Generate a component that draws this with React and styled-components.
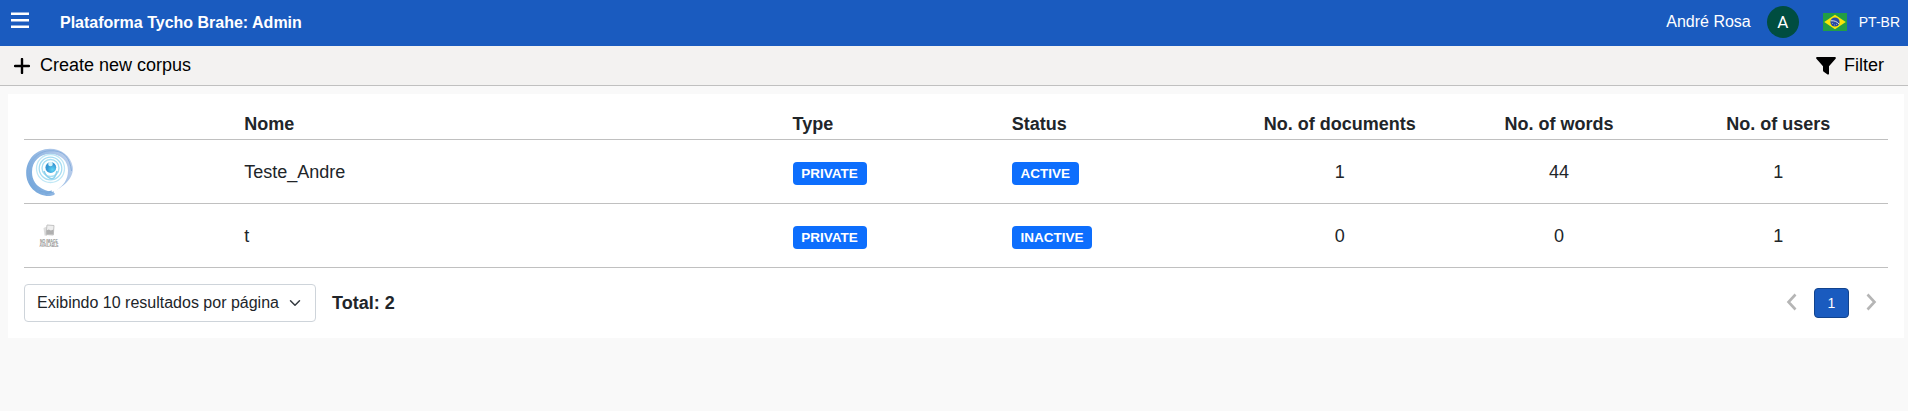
import React from "react";
import styled, { createGlobalStyle } from "styled-components";

const GlobalStyle = createGlobalStyle`
  * { box-sizing: border-box; }
  body {
    margin: 0;
    background: #f9f9f9;
    color: #212529;
    font-family: "Liberation Sans", Arial, sans-serif;
    font-size: 18px;
    line-height: 1.5;
  }
`;

const Header = styled.header`
  height: 46px;
  padding: 0 8px 0 11px;
  display: flex;
  align-items: center;
  justify-content: space-between;
  background: #1a5bbf;
  color: #fff;
`;

const Group = styled.div`
  display: flex;
  align-items: center;
`;

const MenuIcon = styled.svg`
  display: block;
  margin: 0 31px 6px 0;
`;

const Title = styled.h1`
  margin: 0;
  font-size: 16px;
  line-height: 24px;
`;

const UserName = styled.span`
  margin: 0 16px 2px 0;
  font-size: 16px;
  line-height: 24px;
`;

const Avatar = styled.span`
  width: 32px;
  height: 32px;
  margin: -2px 24px 0 0;
  border-radius: 50%;
  background: #004d40;
  display: flex;
  align-items: center;
  justify-content: center;
  padding-top: 2px;
  font-family: Roboto, sans-serif;
  font-size: 17px;
`;

const Flag = styled.svg`
  display: block;
  margin: -2px 12px 0 0;
`;

const Language = styled.span`
  font-size: 14px;
  line-height: 20px;
  margin-bottom: 2px;
`;

const Toolbar = styled.div`
  height: 40px;
  padding: 0 24px 0 14px;
  display: flex;
  align-items: center;
  justify-content: space-between;
  background: #f3f2f1;
  border-bottom: 1px solid #c0c0c0;
  color: #000;
`;

const Action = styled.button`
  display: flex;
  align-items: center;
  gap: ${(p) => p.$gap}px;
  padding: 0;
  border: 0;
  background: none;
  color: inherit;
  font: inherit;
`;

const Card = styled.main`
  margin: 8px 4px 0 8px;
  padding: 16px;
  height: 244px;
  background: #fff;
`;

const Table = styled.table`
  width: 100%;
  table-layout: fixed;
  border-collapse: separate;
  border-spacing: 0;
`;

const Row = styled.tr`
  height: ${(p) => (p.$head ? 30 : 64)}px;
`;

const HeadCell = styled.th`
  padding: 1px;
  text-align: ${(p) => (p.$center ? "center" : "left")};
  border-bottom: 1px solid #c0c0c0;
  width: ${(p) => (p.$wide ? 2.5 : 1) * (100 / 8.5)}%;
`;

const Cell = styled.td`
  padding: 3px 1px 1px;
  vertical-align: middle;
  text-align: ${(p) => (p.$center ? "center" : "left")};
  border-bottom: 1px solid #c0c0c0;
`;

const Thumb = styled.svg`
  display: block;
`;

const Badge = styled.span`
  display: inline-block;
  padding: 0.35em 0.65em;
  border-radius: 4px;
  background: #0d6efd;
  color: #fff;
  font-size: 13.5px;
  font-weight: 700;
  line-height: 1;
  vertical-align: baseline;
`;

const Footer = styled.div`
  margin-top: 16px;
  display: flex;
  align-items: center;
  justify-content: space-between;
`;

const PageSize = styled.button`
  width: 292px;
  height: 38px;
  margin-right: 16px;
  padding: 0 14px 0 12px;
  display: flex;
  align-items: center;
  justify-content: space-between;
  border: 1px solid #ced4da;
  border-radius: 4px;
  background: #fff;
  color: inherit;
  font-family: inherit;
  font-size: 16px;
`;

const Pager = styled.nav`
  display: flex;
  align-items: center;
  gap: 17px;
  padding-right: 6px;
  svg { display: block; margin-bottom: 2px; }
`;

const PageButton = styled.button`
  width: 35px;
  height: 30px;
  padding: 0;
  border: 1px solid #12438d;
  border-radius: 4px;
  background: #1a5bbf;
  color: #fff;
  font-family: inherit;
  font-size: 14px;
`;

const SwirlThumb = () => (
  <Thumb width="50" height="50" viewBox="0 0 50 50" fill="none">
    <defs>
      <linearGradient id="ring" x1="0" y1="0.8" x2="1" y2="0.3">
        <stop offset="0" stopColor="#6fa4da" />
        <stop offset="0.5" stopColor="#98bbe4" />
        <stop offset="1" stopColor="#bccfec" />
      </linearGradient>
      <radialGradient id="ball" cx="0.65" cy="0.7">
        <stop offset="0" stopColor="#5ed4f5" />
        <stop offset="1" stopColor="#3797d3" />
      </radialGradient>
    </defs>
    <path
      d="M31 42.500C38 38 49 31 47.800 19C46 8 36 .8 25 .8C11 1 1.200 11.500 1.200 25C1.200 38 11.500 48 24 48C27 48 30 47 30 45.500C27 43.500 24 44 20 42C11 38.500 7 32 7 24C7 13 15 6 25 6C36 6 43 13 43 22.500C43 32 38 38 31 42.500Z"
      fill="url(#ring)"
    />
    <path d="M4 34C0 19 9 4 24 2.800S45 10 46.500 23" stroke="#86aedd" strokeWidth="1" />
    <path d="M14 42.500q6 3 13 .5M20 46l9-2" stroke="#78a8da" strokeWidth="1.200" />
    <circle cx="25.500" cy="20.500" r="14" stroke="#bfe7f5" strokeWidth="1.300" />
    <circle cx="25.500" cy="20.500" r="11.300" stroke="#a5ddf2" strokeWidth="1.300" />
    <circle cx="25.500" cy="20" r="8.500" stroke="#a8dff3" strokeWidth="1.400" />
    <path d="M19 23Q21 29 25.500 30.500T32 23" stroke="#8bd0ec" strokeWidth="1.500" />
    <circle cx="25.800" cy="19.500" r="5.400" fill="url(#ball)" />
    <circle cx="25.500" cy="16" r="2.300" fill="#d5f2fb" />
  </Thumb>
);

const NoImageThumb = () => (
  <Thumb width="50" height="50" viewBox="0 0 50 50">
    <path d="M18.500 16L22 14.500V24L19.500 23.500Z" fill="#ddd" />
    <path d="M22 13l7 .5-.7 9.500-7.300-.5Z" fill="#eee" stroke="#c4c4c4" />
    <path d="M21.300 18.500l2.500-1 2 1 2.700-1-.2 5-7-.3Z" fill="#b0b0b0" />
    <g fill="#8c8c8c" fontSize="4.500" fontFamily="Liberation Sans" fontWeight="700">
      <text x="15" y="30.500" textLength="18" lengthAdjust="spacingAndGlyphs">NO IMAGE</text>
      <text x="14.500" y="35" textLength="19" lengthAdjust="spacingAndGlyphs">AVAILABLE</text>
    </g>
  </Thumb>
);

const Chevron = ({ d }) => (
  <svg width="16" height="18" viewBox="0 0 16 18" fill="none" stroke="#b5b5b5" strokeWidth="2.600">
    <path d={d} />
  </svg>
);

const columns = [
  { label: "" },
  { label: "Nome", wide: true },
  { label: "Type" },
  { label: "Status" },
  { label: "No. of documents", center: true },
  { label: "No. of words", center: true },
  { label: "No. of users", center: true },
];

const corpora = [
  { name: "Teste_Andre", type: "PRIVATE", status: "ACTIVE", counts: [1, 44, 1], Image: SwirlThumb },
  { name: "t", type: "PRIVATE", status: "INACTIVE", counts: [0, 0, 1], Image: NoImageThumb },
];

export default function App() {
  return (
    <>
      <GlobalStyle />
      <Header>
        <Group>
          <MenuIcon width="18" height="16" viewBox="0 0 18 16" stroke="#fff" strokeWidth="2.400">
            <path d="M0 1.800h18M0 8.300h18M0 14.700h18" />
          </MenuIcon>
          <Title>Plataforma Tycho Brahe: Admin</Title>
        </Group>
        <Group>
          <UserName>André Rosa</UserName>
          <Avatar>A</Avatar>
          <Flag width="24" height="18" viewBox="0 0 24 18">
            <path fill="#229e45" d="M0 0h24v18H0z" />
            <path fill="#f8e509" d="M12 1.700L22.800 9 12 16.300 1.200 9z" />
            <circle cx="12" cy="9" r="4.600" fill="#2b49a3" />
            <path d="M7.800 7.800Q13 7.300 16 11" fill="none" stroke="#e8eef0" strokeWidth="0.900" />
            <path d="M9 10.500h1M11 12h1M13 11.500h1" stroke="#a9b7cc" strokeWidth="0.700" />
          </Flag>
          <Language>PT-BR</Language>
        </Group>
      </Header>
      <Toolbar>
        <Action $gap={10}>
          <svg width="16" height="16" viewBox="0 0 16 16" stroke="#000" strokeWidth="2.400" strokeLinecap="round">
            <path d="M8 1v14M1 8h14" />
          </svg>
          Create new corpus
        </Action>
        <Action $gap={8}>
          <svg width="20" height="18" viewBox="0 0 20 18">
            <path d="M.8 0h18.400q1.100.7.400 1.700L13 9.200v7.500q-.3 1.200-1.400.8L7.700 14.700Q7 14.200 7 13.500V9.200L.4 1.700Q-.4.700.8 0z" />
          </svg>
          Filter
        </Action>
      </Toolbar>
      <Card>
        <Table>
          <thead>
            <Row $head>
              {columns.map((c) => (
                <HeadCell key={c.label} $wide={c.wide} $center={c.center}>{c.label}</HeadCell>
              ))}
            </Row>
          </thead>
          <tbody>
            {corpora.map(({ name, type, status, counts, Image }) => (
              <Row key={name}>
                <Cell><Image /></Cell>
                <Cell>{name}</Cell>
                <Cell><Badge>{type}</Badge></Cell>
                <Cell><Badge>{status}</Badge></Cell>
                {counts.map((n, i) => <Cell key={i} $center>{n}</Cell>)}
              </Row>
            ))}
          </tbody>
        </Table>
        <Footer>
          <Group>
            <PageSize>
              Exibindo 10 resultados por página
              <svg width="12" height="12" viewBox="0 0 16 16" fill="none" stroke="#343a40" strokeWidth="2" strokeLinecap="round" strokeLinejoin="round">
                <path d="M2 5l6 6 6-6" />
              </svg>
            </PageSize>
            <strong>Total: 2</strong>
          </Group>
          <Pager>
            <Chevron d="M14.500 1.500L7.500 9l7 7.500" />
            <PageButton>1</PageButton>
            <Chevron d="M1.500 1.500L8.500 9l-7 7.500" />
          </Pager>
        </Footer>
      </Card>
    </>
  );
}
